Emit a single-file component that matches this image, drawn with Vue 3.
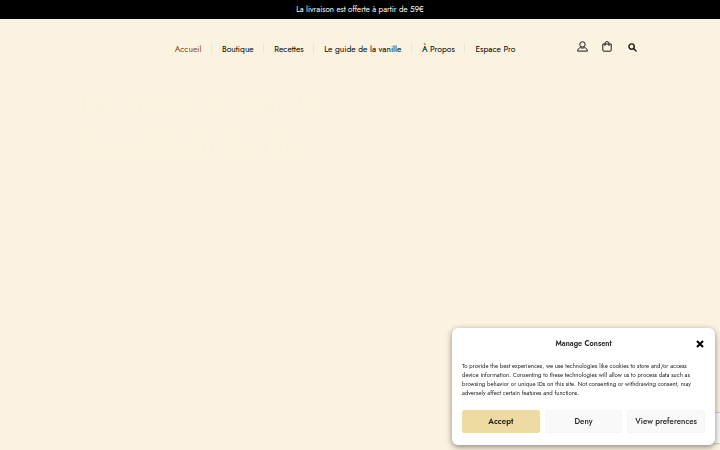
<script setup>
import { ref } from 'vue'

const showConsent = ref(true)

const links = [
  'Accueil',
  'Boutique',
  'Recettes',
  'Le guide de la vanille',
  'À Propos',
  'Espace Pro',
]

const message = [
  'To provide the best experiences, we use technologies like cookies to store and/or access',
  'device information. Consenting to these technologies will allow us to process data such as',
  'browsing behavior or unique IDs on this site. Not consenting or withdrawing consent, may',
  'adversely affect certain features and functions.',
]
</script>

<template>
  <div class="page">
    <div class="banner"><span>La livraison est offerte à partir de 59€</span></div>

    <header class="header">
      <nav class="menu">
        <a v-for="(link, i) in links" :key="link" :class="{ active: i === 0 }">{{ link }}</a>
      </nav>

      <div class="icons">
        <svg class="user" viewBox="0 0 11 11" fill="none" stroke="currentColor">
          <circle cx="5.5" cy="3.4" r="2.7" />
          <path d="M3.3 6.7C1.6 7.1.7 8.2.7 10.1h9.6c0-1.9-.9-3-2.6-3.4q-2.2.9-4.4 0z" />
        </svg>
        <svg class="bag" viewBox="0 0 10 11" fill="none" stroke="currentColor">
          <path d="M.8 3h8.4v6.2q0 1-1 1H1.8q-1 0-1-1zM3 5V2.6q0-2 2-2t2 2V5" />
        </svg>
        <svg class="search" viewBox="0 0 9 9" fill="none" stroke="currentColor">
          <circle cx="3.6" cy="3.6" r="2.7" />
          <path d="M5.8 5.8L8.1 8.1" stroke-linecap="round" />
        </svg>
      </div>
    </header>

    <section class="hero">
      <h1>Découvrez la vanille<br />d’exception de l’île</h1>
    </section>

    <div class="badge"></div>

    <div v-if="showConsent" class="consent">
      <div class="consent-header">
        <h2>Manage Consent</h2>
        <button class="close" aria-label="Close" @click="showConsent = false">
          <svg viewBox="0 0 8 8" stroke="currentColor">
            <path d="M1 1l6 6M7 1L1 7" />
          </svg>
        </button>
      </div>
      <p>
        <span v-for="line in message" :key="line">{{ line }}</span>
      </p>
      <div class="buttons">
        <button class="accept" @click="showConsent = false">Accept</button>
        <button @click="showConsent = false">Deny</button>
        <button class="view">View preferences</button>
      </div>
    </div>
  </div>
</template>

<style>
body {
  background: #fbf3e1;
}
</style>

<style scoped>
.page {
  height: 450px;
  overflow: hidden;
  background: #fbf3e1;
  color: #000;
  font-family: Jost, Lato, sans-serif;
}

.banner {
  height: 19px;
  background: #000;
  color: #fff;
  font-size: 8px;
  line-height: 19px;
  text-align: center;
}

.header {
  display: flex;
  align-items: center;
  height: 58px;
  padding-left: 174.7px;
}

.menu {
  display: flex;
  width: 402.3px;
}

.menu a {
  position: relative;
  font-size: 8.5px;
  line-height: 12px;
  margin: 1px 20.5px 0 0;
  white-space: nowrap;
}

.menu a:not(:last-child)::after {
  content: '';
  position: absolute;
  right: -10.5px;
  top: 1px;
  height: 9px;
  border-right: 1px solid #eae2d2;
}

.menu .active {
  color: #7b4a20;
}

.icons {
  display: flex;
  align-items: center;
  margin-top: -3px;
  color: #1c1a17;
}

.icons .user {
  width: 11px;
  height: 11px;
}

.icons .bag {
  width: 10px;
  height: 11px;
  margin-left: 14.5px;
}

.icons .search {
  width: 9px;
  height: 9px;
  margin: 2px 0 0 15.5px;
  stroke-width: 1.4;
}

.hero {
  padding: 8px 0 0 80px;
}

.hero h1 {
  margin: 0;
  color: #faf2df;
  font-size: 28px;
  font-weight: 400;
  line-height: 39px;
}

.badge {
  position: fixed;
  right: 0;
  bottom: 7px;
  width: 35px;
  height: 30px;
  background: #f9f9f9;
  box-shadow: 0 0 2px #808080;
}

.consent {
  position: fixed;
  right: 5px;
  bottom: 5px;
  box-sizing: border-box;
  width: 263px;
  height: 117px;
  padding: 10px;
  border-radius: 6px;
  background: #fff;
  box-shadow: 0 2px 6px rgba(0, 0, 0, 0.45);
  color: #222;
}

.consent-header {
  display: flex;
  align-items: center;
  height: 11px;
}

.consent-header h2 {
  flex: 1;
  margin: 0 0 0 10px;
  font-size: 7.4px;
  font-weight: 600;
  text-align: center;
}

button {
  padding: 0;
  border: 0;
  color: inherit;
  font: inherit;
  cursor: pointer;
}

.close {
  width: 10px;
  height: 10px;
  background: none;
  color: #000;
}

.close svg {
  display: block;
  width: 8px;
  height: 8px;
  margin: 1px;
  stroke-width: 2;
}

.consent p {
  margin: 13px 0 12px;
  font-size: 6px;
  line-height: 9px;
}

.consent p span {
  display: block;
  white-space: nowrap;
}

.buttons {
  display: grid;
  grid-template-columns: repeat(3, 1fr);
  gap: 5px;
}

.buttons button {
  height: 23px;
  padding-bottom: 2px;
  border: 1px solid #f5f5f5;
  border-radius: 2px;
  background: #f9f9f9;
  font-size: 8px;
  font-weight: 500;
  white-space: nowrap;
}

.buttons .accept {
  border-color: #eddba3;
  background: #eddba3;
  font-weight: 600;
}
</style>
